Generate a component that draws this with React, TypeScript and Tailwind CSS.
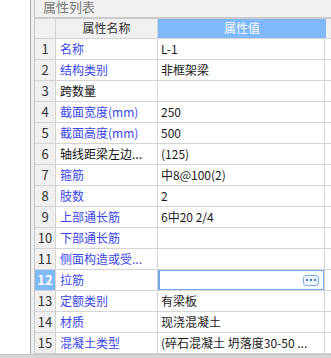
import React from "react";

type Row = { name: string; value: string; link?: boolean };

const rows: Row[] = [
  { name: "名称", value: "L-1", link: true },
  { name: "结构类别", value: "非框架梁", link: true },
  { name: "跨数量", value: "" },
  { name: "截面宽度(mm)", value: "250", link: true },
  { name: "截面高度(mm)", value: "500", link: true },
  { name: "轴线距梁左边...", value: "(125)" },
  { name: "箍筋", value: "中8@100(2)", link: true },
  { name: "肢数", value: "2", link: true },
  { name: "上部通长筋", value: "6中20 2/4", link: true },
  { name: "下部通长筋", value: "", link: true },
  { name: "侧面构造或受...", value: "", link: true },
  { name: "拉筋", value: "", link: true },
  { name: "定额类别", value: "有梁板", link: true },
  { name: "材质", value: "现浇混凝土", link: true },
  { name: "混凝土类型", value: "(碎石混凝土 坍落度30-50 ...", link: true },
];

const font = { fontFamily: '"Noto Sans CJK SC", "Noto Sans", sans-serif' };

export default function App() {
  return (
    <div
      className="w-[331px] h-[358px] bg-white flex flex-col overflow-hidden text-[12px] text-[#1a1a1a]"
      style={font}
    >
      <div className="flex flex-1 min-h-0">
        <div className="w-[30px] bg-white" />
        <div className="w-[5px] bg-[#f0f0f0] border-l border-r border-l-[#a8a8a8] border-r-[#c8c8c8]" />
        <div className="flex-1 flex flex-col min-w-0">
          <div className="h-[17px] bg-[#f0f0f0] pl-[8px] text-[13px] leading-[13px] text-[#7a7a7a] border-b-2 border-[#cbcbcb] box-content">
            属性列表
          </div>
          <div className="flex h-[21px] border-b border-[#d4d4d4] bg-[#f0f0f0]">
            <div className="w-[21px] border-r border-[#d4d4d4]" />
            <div className="w-[102px] border-r border-[#d4d4d4] flex items-center justify-center text-[#333]">
              属性名称
            </div>
            <div className="w-[168px] bg-[#80b9f9] flex items-center justify-center text-white">
              属性值
            </div>
            <div className="flex-1" />
          </div>
          {rows.map((r, i) => {
            const active = i === 11;
            return (
              <div key={i} className="flex h-[21px] border-b border-[#d4d4d4] shrink-0">
                <div
                  className={
                    active
                      ? "w-[21px] border-r border-[#d4d4d4] bg-[#80b9f9] text-white font-bold flex items-center justify-center text-[13px]"
                      : "w-[21px] border-r border-[#d4d4d4] bg-[#f0f0f0] text-[#333] flex items-center justify-center text-[13px]"
                  }
                >
                  {i + 1}
                </div>
                <div
                  className={
                    r.link
                      ? "w-[102px] border-r border-[#d4d4d4] pl-[4px] flex items-center text-[#3a46ea] whitespace-nowrap overflow-hidden"
                      : "w-[102px] border-r border-[#d4d4d4] pl-[4px] flex items-center text-[#111] whitespace-nowrap overflow-hidden"
                  }
                >
                  {r.name}
                </div>
                <div className="w-[167px] border-r border-[#d4d4d4] relative flex items-center pl-[3px] whitespace-nowrap overflow-hidden">
                  {r.value}
                  {active && (
                    <div className="absolute -top-px -bottom-px left-0 -right-px border-2 border-[#74a8e6] flex items-center justify-end pr-[4px]">
                      <div className="w-[16px] h-[11px] rounded-[3px] border border-[#7eaee6] bg-[#eef5fd] flex items-center justify-center gap-[2px]">
                        <span className="w-[2px] h-[2px] bg-[#3d7fd0]" />
                        <span className="w-[2px] h-[2px] bg-[#3d7fd0]" />
                        <span className="w-[2px] h-[2px] bg-[#3d7fd0]" />
                      </div>
                    </div>
                  )}
                </div>
                <div className="flex-1 bg-white" />
              </div>
            );
          })}
        </div>
      </div>
      <div className="h-[4px] bg-[#d6d6d6] border-t border-[#c4c4c4] shrink-0" />
    </div>
  );
}
